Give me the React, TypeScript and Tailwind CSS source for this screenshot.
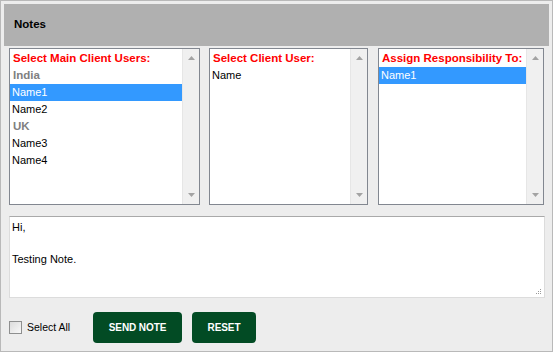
import React from "react";

const font = { fontFamily: '"Liberation Sans", Arial, sans-serif' };

function Arrow({ down }: { down?: boolean }) {
  return (
    <svg width="7" height="4" viewBox="0 0 7 4">
      {down ? (
        <polygon points="0,0 7,0 3.5,4" fill="#a3a3a3" />
      ) : (
        <polygon points="0,4 7,4 3.5,0" fill="#a3a3a3" />
      )}
    </svg>
  );
}

function Scrollbar() {
  return (
    <div className="w-[17px] h-full bg-[#f0f0f0] border-l border-[#e6e6e6] flex flex-col items-center justify-between pt-[7px] pb-[7px]">
      <Arrow />
      <Arrow down />
    </div>
  );
}

type Item = { text: string; kind: "head" | "group" | "item" | "sel" };

function ListBox({ items, width }: { items: Item[]; width: string }) {
  return (
    <div className={`${width} h-[157px] border border-[#828790] bg-white flex`}>
      <div className="flex-1 pt-[1px]">
        {items.map((it, i) => {
          if (it.kind === "head")
            return (
              <div key={i} className="h-[17px] flex items-center pl-[3px] text-[11.5px] font-bold text-[#ff0000]">
                {it.text}
              </div>
            );
          if (it.kind === "group")
            return (
              <div key={i} className="h-[17px] flex items-center pl-[3px] text-[11.5px] font-bold text-[#808080]">
                {it.text}
              </div>
            );
          if (it.kind === "sel")
            return (
              <div key={i} className="h-[17px] flex items-center pl-[2px] text-[11px] text-white bg-[#3399ff]">
                {it.text}
              </div>
            );
          return (
            <div key={i} className="h-[17px] flex items-center pl-[2px] text-[11px] text-black">
              {it.text}
            </div>
          );
        })}
      </div>
      <Scrollbar />
    </div>
  );
}

export default function App() {
  return (
    <div style={font} className="w-[553px] h-[352px] bg-[#ededed] border border-[#b9b9b9] flex flex-col">
      <div className="mx-[3px] mt-[3px] h-[42px] bg-[#b0b0b0] flex items-center pl-[10px]">
        <span className="text-[11.5px] font-bold text-black">Notes</span>
      </div>
      <div className="px-[8px] flex flex-col">
        <div className="flex mt-[2px]">
          <ListBox
            width="w-[191px]"
            items={[
              { text: "Select Main Client Users:", kind: "head" },
              { text: "India", kind: "group" },
              { text: "Name1", kind: "sel" },
              { text: "Name2", kind: "item" },
              { text: "UK", kind: "group" },
              { text: "Name3", kind: "item" },
              { text: "Name4", kind: "item" },
            ]}
          />
          <div className="w-[9px]" />
          <ListBox
            width="w-[159px]"
            items={[
              { text: "Select Client User:", kind: "head" },
              { text: "Name", kind: "item" },
            ]}
          />
          <div className="w-[10px]" />
          <ListBox
            width="w-[166px]"
            items={[
              { text: "Assign Responsibility To:", kind: "head" },
              { text: "Name1", kind: "sel" },
            ]}
          />
        </div>
        <div className="relative mt-[11px] w-[536px] h-[82px] bg-white border border-[#dcdcdc] border-t-[#a9a9a9] pl-[2px] pt-[2px] text-[11px] leading-[16px] text-black">
          <div>Hi,</div>
          <div>&nbsp;</div>
          <div>Testing Note.</div>
          <svg className="absolute right-[2px] bottom-[2px]" width="7" height="7" viewBox="0 0 7 7">
            <rect x="5" y="1" width="1" height="1" fill="#9a9a9a" />
            <rect x="3" y="3" width="1" height="1" fill="#9a9a9a" />
            <rect x="5" y="3" width="1" height="1" fill="#9a9a9a" />
            <rect x="1" y="5" width="1" height="1" fill="#9a9a9a" />
            <rect x="3" y="5" width="1" height="1" fill="#9a9a9a" />
            <rect x="5" y="5" width="1" height="1" fill="#9a9a9a" />
          </svg>
        </div>
        <div className="flex items-center mt-[14px]">
          <div className="w-[84px] flex items-center">
            <div className="w-[13px] h-[13px] border border-[#8e8f8f] bg-gradient-to-br from-[#dcdcdc] to-[#f8f8f8]" />
            <span className="ml-[5px] text-[10.5px] text-black">Select All</span>
          </div>
          <button className="w-[89px] h-[31px] rounded-[4px] bg-[#024b24] text-white text-[10px] font-bold tracking-[-0.1px]">
            SEND NOTE
          </button>
          <button className="ml-[10px] w-[64px] h-[31px] rounded-[4px] bg-[#024b24] text-white text-[10px] font-bold tracking-[-0.1px]">
            RESET
          </button>
        </div>
      </div>
    </div>
  );
}
